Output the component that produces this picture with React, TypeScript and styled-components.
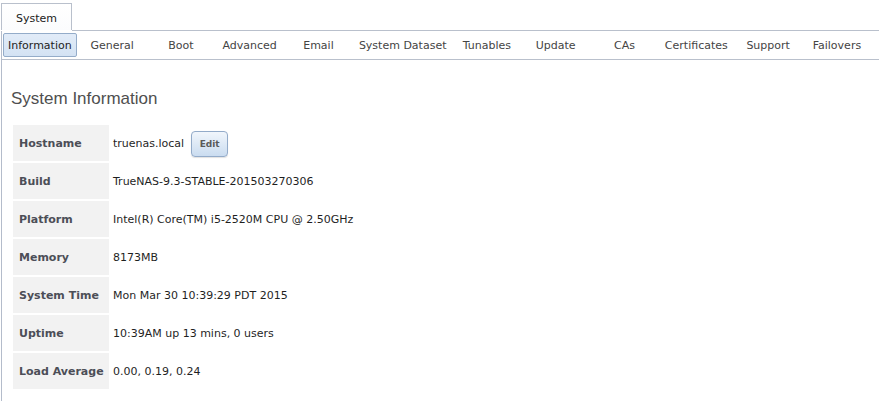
import React from "react";
import styled, { createGlobalStyle } from "styled-components";

const GlobalStyle = createGlobalStyle`
  html, body { margin: 0; padding: 0; background: #ffffff; }
  body { font-family: "DejaVu Sans", Verdana, sans-serif; font-size: 11px; color: #222; }
`;

const Page = styled.div`
  padding: 3px 0 0 1px;
  min-height: 398px;
  display: flex;
  flex-direction: column;
`;

const TabStrip = styled.div`
  display: flex;
  height: 28px;
`;

const TopTab = styled.div`
  width: 71px;
  height: 27px;
  box-sizing: border-box;
  padding-top: 2px;
  border: 1px solid #b9c0cc;
  border-bottom: none;
  background: linear-gradient(#ffffff, #fbfcfd);
  display: flex;
  align-items: center;
  justify-content: center;
  color: #222;
  font-size: 11px;
`;

const StripFiller = styled.div`
  flex: 1;
  border-bottom: 1px solid #b9c0cc;
`;

const Panel = styled.div`
  flex: 1;
  border-left: 1px solid #b4bccb;
  display: flex;
  flex-direction: column;
`;

const SubTabRow = styled.div`
  display: flex;
  gap: 2px;
  height: 29px;
  padding: 2px 0 0 1px;
  box-sizing: border-box;
  border-bottom: 1px solid #b9c0cc;
  align-items: flex-start;
`;

const SubTab = styled.div<{ $active?: boolean }>`
  min-width: 66.8px;
  height: 24px;
  box-sizing: border-box;
  padding: 0 4px;
  border: 1px solid ${(p) => (p.$active ? "#94acc9" : "transparent")};
  border-radius: 2px;
  background: ${(p) => (p.$active ? "linear-gradient(#e2ecf8, #d3e2f3)" : "transparent")};
  color: ${(p) => (p.$active ? "#1e1e1e" : "#444")};
  display: flex;
  align-items: center;
  justify-content: center;
  white-space: nowrap;
  font-size: 11px;
`;

const Content = styled.div`
  padding: 29px 0 0 9px;
`;

const Heading = styled.h2`
  margin: 0 0 14px 0;
  font-family: "Liberation Sans", Arial, sans-serif;
  font-weight: normal;
  font-size: 17px;
  line-height: 20px;
  color: #4f4f4f;
`;

const InfoTable = styled.table`
  border-collapse: separate;
  border-spacing: 2px;
`;

const Row = styled.tr`
  height: 36px;
`;

const Label = styled.th`
  width: 96px;
  box-sizing: border-box;
  background: #f2f2f2;
  text-align: left;
  padding: 0 0 0 6px;
  font-weight: bold;
  font-size: 11px;
  color: #4c4e57;
  white-space: nowrap;
  vertical-align: middle;
`;

const Value = styled.td`
  padding: 0 0 0 2px;
  font-size: 11px;
  color: #1f1f1f;
  vertical-align: middle;
  white-space: nowrap;
`;

const ValueWithAction = styled.div`
  display: flex;
  align-items: center;
  gap: 7px;
`;

const EditButton = styled.button`
  width: 37px;
  height: 26px;
  box-sizing: border-box;
  border: 1px solid #93abc9;
  border-radius: 4px;
  background: linear-gradient(#f1f6fc, #cadcf0);
  box-shadow: 0 1px 1px rgba(0, 0, 0, 0.12);
  font-family: "DejaVu Sans", Verdana, sans-serif;
  font-size: 9px;
  font-weight: bold;
  color: #5a5a5a;
  padding: 0;
  margin-top: 1px;
  cursor: pointer;
`;

const subTabs = [
  "Information",
  "General",
  "Boot",
  "Advanced",
  "Email",
  "System Dataset",
  "Tunables",
  "Update",
  "CAs",
  "Certificates",
  "Support",
  "Failovers",
];

const rows: [string, string][] = [
  ["Build", "TrueNAS-9.3-STABLE-201503270306"],
  ["Platform", "Intel(R) Core(TM) i5-2520M CPU @ 2.50GHz"],
  ["Memory", "8173MB"],
  ["System Time", "Mon Mar 30 10:39:29 PDT 2015"],
  ["Uptime", "10:39AM up 13 mins, 0 users"],
  ["Load Average", "0.00, 0.19, 0.24"],
];

export default function App() {
  return (
    <>
      <GlobalStyle />
      <Page>
        <TabStrip>
          <TopTab>System</TopTab>
          <StripFiller />
        </TabStrip>
        <Panel>
          <SubTabRow>
            {subTabs.map((t, i) => (
              <SubTab key={t} $active={i === 0}>
                {t}
              </SubTab>
            ))}
          </SubTabRow>
          <Content>
            <Heading>System Information</Heading>
            <InfoTable>
              <tbody>
                <Row>
                  <Label>Hostname</Label>
                  <Value>
                    <ValueWithAction>
                      <span>truenas.local</span>
                      <EditButton>Edit</EditButton>
                    </ValueWithAction>
                  </Value>
                </Row>
                {rows.map(([k, v]) => (
                  <Row key={k}>
                    <Label>{k}</Label>
                    <Value>{v}</Value>
                  </Row>
                ))}
              </tbody>
            </InfoTable>
          </Content>
        </Panel>
      </Page>
    </>
  );
}
